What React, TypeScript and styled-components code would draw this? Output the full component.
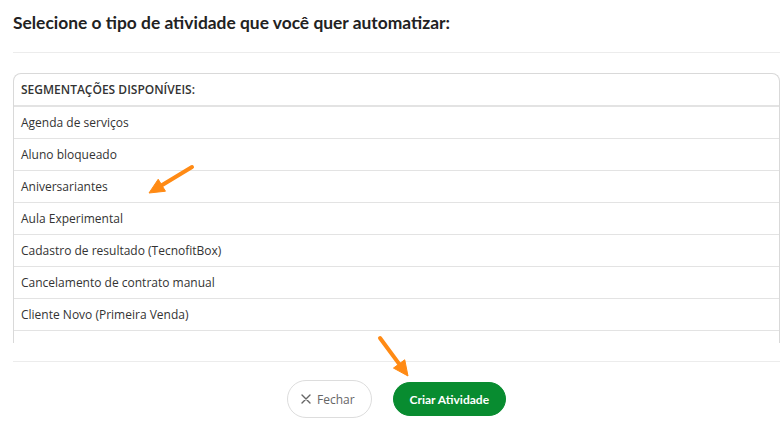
import styled, { createGlobalStyle } from "styled-components";

const GlobalStyle = createGlobalStyle`
  html, body {
    margin: 0;
    padding: 0;
    background: #ffffff;
  }
  body {
    font-family: "Open Sans", "Noto Sans", sans-serif;
    color: #333333;
    overflow: hidden;
  }
`;

const Page = styled.div`
  position: relative;
  width: 780px;
  height: 434px;
  padding-left: 13px;
  box-sizing: border-box;
  overflow: hidden;
`;

const Title = styled.h2`
  margin: 0;
  padding: 11px 0 17px;
  font-family: "Lato", "Liberation Sans", sans-serif;
  font-weight: 700;
  font-size: 17.4px;
  line-height: 24px;
  color: #222222;
`;

const Divider = styled.hr`
  margin: 0;
  border: none;
  border-top: 1px solid #ececec;
`;

const Panel = styled.div`
  margin-top: 20px;
  height: 269px;
  overflow: hidden;
  border: 1px solid #d9d9d9;
  border-bottom: none;
  border-radius: 8px 8px 0 0;
`;

const PanelHeader = styled.div`
  height: 31px;
  display: flex;
  align-items: center;
  padding: 0 7px;
  border-bottom: 2px solid #e3e3e3;
  font-size: 12px;
  font-weight: 600;
  color: #333333;
  text-transform: uppercase;
`;

const List = styled.ul`
  list-style: none;
  margin: 0;
  padding: 0;
`;

const Item = styled.li`
  height: 31px;
  display: flex;
  align-items: center;
  padding: 0 7px;
  border-bottom: 1px solid #e3e3e3;
  font-size: 12px;
  color: #333333;
  cursor: pointer;
`;

const Footer = styled.div`
  margin-top: 18px;
  padding-top: 18px;
  border-top: 1px solid #ececec;
  display: flex;
  justify-content: center;
  align-items: center;
  gap: 21px;
`;

const Button = styled.button<{ $primary?: boolean }>`
  display: inline-flex;
  align-items: center;
  justify-content: center;
  gap: 6px;
  border-radius: 20px;
  font-size: 12px;
  cursor: pointer;
  box-sizing: border-box;
  height: ${(p) => (p.$primary ? "34px" : "38px")};
  padding: ${(p) => (p.$primary ? "0 16px" : "0 16px 0 13px")};
  border: 1px solid ${(p) => (p.$primary ? "#088c30" : "#dddddd")};
  background: ${(p) => (p.$primary ? "#088c30" : "#ffffff")};
  color: ${(p) => (p.$primary ? "#ffffff" : "#666666")};
  font-family: ${(p) =>
    p.$primary ? `"Lato", "Liberation Sans", sans-serif` : `"Open Sans", sans-serif`};
  font-weight: ${(p) => (p.$primary ? 700 : 400)};
`;

const Overlay = styled.svg`
  position: absolute;
  left: 0;
  top: 0;
  pointer-events: none;
`;

const items = [
  "Agenda de serviços",
  "Aluno bloqueado",
  "Aniversariantes",
  "Aula Experimental",
  "Cadastro de resultado (TecnofitBox)",
  "Cancelamento de contrato manual",
  "Cliente Novo (Primeira Venda)",
];

function Arrow({ x1, y1, x2, y2 }: { x1: number; y1: number; x2: number; y2: number }) {
  const ang = Math.atan2(y2 - y1, x2 - x1);
  const len = 15;
  const w = 7;
  const bx = x2 - Math.cos(ang) * len;
  const by = y2 - Math.sin(ang) * len;
  const px = -Math.sin(ang) * w;
  const py = Math.cos(ang) * w;
  return (
    <g fill="#ff8a14" stroke="#ff8a14">
      <line x1={x1} y1={y1} x2={bx} y2={by} strokeWidth={4} strokeLinecap="round" />
      <polygon
        points={`${x2},${y2} ${bx + px},${by + py} ${bx - px},${by - py}`}
        strokeWidth={1}
        strokeLinejoin="round"
      />
    </g>
  );
}

export default function App() {
  return (
    <Page>
      <GlobalStyle />
      <Title>Selecione o tipo de atividade que você quer automatizar:</Title>
      <Divider />
      <Panel>
        <PanelHeader>Segmentações disponíveis:</PanelHeader>
        <List>
          {items.map((it) => (
            <Item key={it}>{it}</Item>
          ))}
        </List>
      </Panel>
      <Footer>
        <Button type="button">
          <svg width="10" height="10" viewBox="0 0 10 10">
            <path d="M1 1 L9 9 M9 1 L1 9" stroke="#666" strokeWidth="1.4" strokeLinecap="round" />
          </svg>
          Fechar
        </Button>
        <Button type="button" $primary>
          Criar Atividade
        </Button>
      </Footer>
      <Overlay width="780" height="434">
        <Arrow x1={192} y1={167} x2={149} y2={193} />
        <Arrow x1={380} y1={338} x2={408} y2={376} />
      </Overlay>
    </Page>
  );
}
